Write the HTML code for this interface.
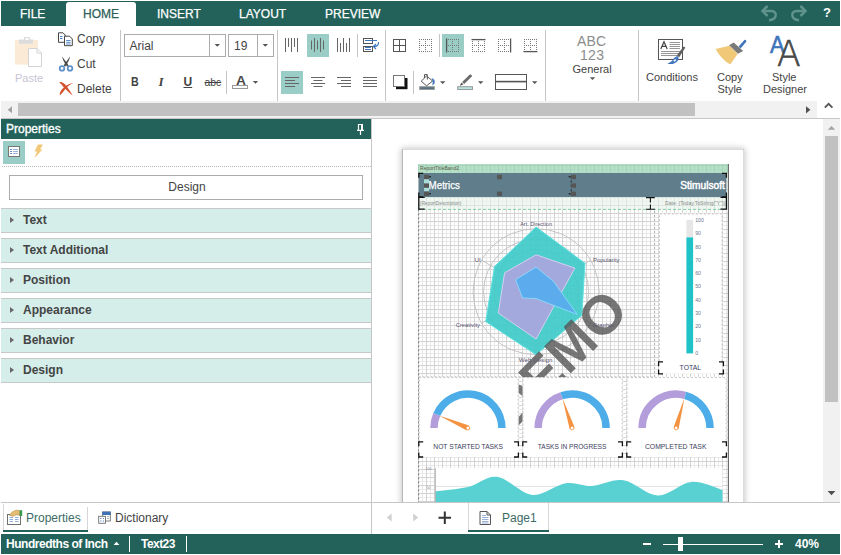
<!DOCTYPE html>
<html lang="en">
<head>
<meta charset="utf-8">
<title>Report Designer</title>
<style>
html,body{margin:0;padding:0;background:#fff;}
body{width:841px;height:555px;position:relative;overflow:hidden;font-family:"Liberation Sans",Arial,sans-serif;font-size:12px;color:#444;}
.a{position:absolute;}
.t{position:absolute;white-space:nowrap;line-height:12px;height:12px;}
.teal{background:#22625a;}
.vsep{position:absolute;width:1px;background:#c6c6c6;}
.hl{position:absolute;background:#99cdc6;}
svg{position:absolute;overflow:visible;}
.tab{position:absolute;top:8px;color:#fff;-webkit-text-stroke:0.25px currentColor;font-size:12px;line-height:12px;white-space:nowrap;}
.grp{position:absolute;left:1px;width:370px;height:23px;background:#d5eeea;border-top:1px solid #c8c8c8;border-bottom:1px solid #c8c8c8;}
.grp b{position:absolute;left:22px;top:5px;font-size:12px;line-height:12px;color:#444;white-space:nowrap;}
.grp i{position:absolute;left:9px;top:7.5px;width:0;height:0;border-left:4.5px solid #686868;border-top:3.8px solid transparent;border-bottom:3.8px solid transparent;}
</style>
</head>
<body>

<!-- ============ TOP TAB BAR ============ -->
<div class="a teal" style="left:1px;top:1px;width:839px;height:25px;"></div>
<div class="a" style="left:66px;top:2px;width:70px;height:25px;background:#fff;border-radius:3px 3px 0 0;"></div>
<div class="tab" style="left:20px;">FILE</div>
<div class="tab" style="left:83px;color:#2d5f59;">HOME</div>
<div class="tab" style="left:157px;">INSERT</div>
<div class="tab" style="left:239px;">LAYOUT</div>
<div class="tab" style="left:325px;">PREVIEW</div>

<svg style="left:758px;top:3px;" width="82" height="22">
 <g fill="none" stroke="#5f938b" stroke-width="2.5" stroke-linejoin="miter">
  <path d="M4.5 8 H13 C17 8 18.5 11 17.5 13.5 C16.5 16 14 17 11 17.2"/>
  <path d="M9.5 3 L4.5 8 L9.5 13"/>
  <path d="M47.5 8 H39 C35 8 33.5 11 34.5 13.5 C35.5 16 38 17 41 17.2"/>
  <path d="M42.5 3 L47.5 8 L42.5 13"/>
 </g>
</svg>
<div class="t" style="left:823px;top:7px;color:#fff;font-weight:bold;font-size:13px;">?</div>


<!-- ============ RIBBON ============ -->
<div class="a" id="ribbon" style="left:0;top:0;width:841px;height:101px;">

<!-- clipboard group -->
<svg style="left:14px;top:36px;" width="30" height="32">
 <rect x="1" y="4" width="23" height="24.6" fill="#fbead6"/>
 <path d="M5 3.5 H10 V1 H16 V3.5 H19 V7.8 H5 Z" fill="#dcdcdc"/>
 <rect x="11.5" y="2" width="3" height="2" fill="#fff"/>
 <path d="M14.5 12.5 H23 L27.5 17 V30.5 H14.5 Z" fill="#fff" stroke="#d3d3d3" stroke-width="1"/>
 <path d="M23 12.5 V17 H27.5" fill="none" stroke="#d3d3d3" stroke-width="1"/>
</svg>
<div class="t" style="left:15px;top:72px;font-size:11px;color:#c6c6d4;">Paste</div>

<svg style="left:57px;top:32px;" width="17" height="15">
 <path d="M1.5 0.8 H6 L8.2 3 V10.3 H1.5 Z" fill="#fff" stroke="#444" stroke-width="1"/>
 <path d="M3 4.5 H5.5 M3 6.5 H5.5" stroke="#4a7fc1" stroke-width="1"/>
 <path d="M7.5 4.2 H12.6 L15.3 7 V13.7 H7.5 Z" fill="#fff" stroke="#444" stroke-width="1"/>
 <path d="M9.2 8.5 H13.6 M9.2 10.3 H13.6 M9.2 12 H13.6" stroke="#4a7fc1" stroke-width="0.9"/>
</svg>
<div class="t" style="left:77px;top:33px;">Copy</div>

<svg style="left:58px;top:55px;" width="16" height="18">
 <path d="M4.2 1.2 C5.4 3.4 7.4 6.2 9.2 8 L10.6 11 L8.8 11.4 L7.4 8.8 C5.8 6.6 4.4 4 4.2 1.2 Z" fill="#4d4d4d"/>
 <path d="M12 1.2 C10.8 3.4 8.8 6.2 7 8 L5.6 11 L7.4 11.4 L8.8 8.8 C10.4 6.6 11.8 4 12 1.2 Z" fill="#4d4d4d"/>
 <circle cx="4" cy="13.4" r="2.3" fill="#fff" stroke="#5b8fc7" stroke-width="1.7"/>
 <circle cx="12" cy="13.4" r="2.3" fill="#fff" stroke="#5b8fc7" stroke-width="1.7"/>
</svg>
<div class="t" style="left:77px;top:58px;">Cut</div>

<svg style="left:58px;top:81px;" width="17" height="16">
 <path d="M1.2 1.2 C4.6 0.6 7.6 3.6 9.6 6.6 C11.2 9 12.8 11.6 14.8 14.4 C12 12.6 9.4 10.2 7.2 7.8 C5.2 5.6 3.4 3 1.2 1.2 Z" fill="#d4532e"/>
 <path d="M15.4 2 C12.6 3 9.8 5.2 7.8 7.6 C5.8 10 4.2 12.6 1.8 14.4 C1.2 11.6 3.2 8.6 5.8 6.4 C8.6 4 11.8 2.6 15.4 2 Z" fill="#d4532e"/>
</svg>
<div class="t" style="left:77px;top:83px;">Delete</div>

<div class="vsep" style="left:120px;top:30px;height:71px;"></div>

<!-- font group -->
<div class="a" style="left:124px;top:34px;width:100px;height:21px;border:1px solid #ababab;background:#fff;"></div>
<div class="a" style="left:209px;top:35px;width:1px;height:21px;background:#ababab;"></div>
<div class="t" style="left:129.5px;top:39.6px;">Arial</div>
<div class="a" style="left:228px;top:34px;width:44px;height:21px;border:1px solid #ababab;background:#fff;"></div>
<div class="a" style="left:257px;top:35px;width:1px;height:21px;background:#ababab;"></div>
<div class="t" style="left:234px;top:39.6px;">19</div>
<svg style="left:0;top:0;" width="841" height="101">
 <path d="M214.6 44 H220 L217.3 46.8 Z M262.6 44 H268 L265.3 46.8 Z" fill="#555"/>
 <path d="M252.8 81 H258.2 L255.5 83.8 Z" fill="#555"/>
 <path d="M440 81.2 H445.4 L442.7 84 Z M478 81.2 H483.4 L480.7 84 Z M532 81.2 H537.4 L534.7 84 Z" fill="#555"/>
 <path d="M589.8 77.2 H595.2 L592.5 80 Z" fill="#555"/>
</svg>
<div class="t" style="left:131px;top:76px;font-weight:bold;font-size:13px;color:#444;transform:scaleX(0.82);transform-origin:0 0;">B</div>
<div class="t" style="left:158.5px;top:76px;font-style:italic;font-weight:bold;font-size:13px;color:#444;font-family:'Liberation Serif',serif;">I</div>
<div class="t" style="left:183.5px;top:76px;font-weight:bold;font-size:12px;color:#444;text-decoration:underline;">U</div>
<div class="t" style="left:204.5px;top:77px;font-size:10.4px;color:#444;text-decoration:line-through;">abc</div>
<div class="vsep" style="left:226px;top:71px;height:23px;"></div>
<div class="t" style="left:235.6px;top:74.5px;font-size:13px;font-weight:bold;color:#4a4a4a;transform:scaleX(1.06);transform-origin:0 0;">A</div>
<div class="a" style="left:232px;top:85px;width:14px;height:2px;border:1px solid #999;background:#fff;"></div>

<div class="vsep" style="left:277px;top:30px;height:71px;"></div>

<!-- alignment group -->
<div class="hl" style="left:307px;top:34px;width:22px;height:23px;"></div>
<div class="hl" style="left:281px;top:71px;width:22px;height:23px;"></div>
<svg style="left:0;top:0;" width="841" height="101">
 <g stroke="#666" stroke-width="1" fill="none">
  <!-- vertical align top -->
  <path d="M285.5 38 V52 M288.5 38 V47 M291.5 38 V52 M294.5 38 V47 M297.5 38 V52"/>
  <!-- middle -->
  <path d="M311.5 40.5 V49.5 M314.5 38 V52 M317.5 40.5 V49.5 M320.5 38 V52 M323.5 40.5 V49.5"/>
  <!-- bottom -->
  <path d="M337.5 38 V52 M340.5 43 V52 M343.5 38 V52 M346.5 43 V52 M349.5 38 V52"/>
  <!-- h align left -->
  <path d="M285 77.5 H299 M285 80.5 H295 M285 83.5 H299 M285 86.5 H295"/>
  <path d="M311 77.5 H325 M313.5 80.5 H322.5 M311 83.5 H325 M313.5 86.5 H322.5"/>
  <path d="M337 77.5 H351 M341 80.5 H351 M337 83.5 H351 M341 86.5 H351"/>
  <path d="M363 77.5 H377 M363 80.5 H377 M363 83.5 H377 M363 86.5 H377"/>
 </g>
 <!-- word wrap icon -->
 <g fill="none" stroke-width="1">
  <rect x="363.5" y="38.5" width="9" height="5" stroke="#555"/>
  <rect x="363.5" y="46.5" width="9" height="5" stroke="#555"/>
  <path d="M365 40.5 H377" stroke="#3f75bb"/>
  <path d="M365 47.5 H371 M365 49.5 H371" stroke="#3f75bb"/>
  <path d="M378.5 42 C378.8 45.2 377 46.5 373.6 46.5 M376 44 L373.4 46.5 L376 49" stroke="#3f75bb" stroke-width="1.2"/>
 </g>
</svg>
<div class="vsep" style="left:357px;top:34px;height:23px;"></div>
<div class="vsep" style="left:385px;top:30px;height:71px;"></div>

<!-- border group -->
<div class="hl" style="left:442px;top:34px;width:22px;height:23px;"></div>
<div class="vsep" style="left:439px;top:34px;height:23px;"></div>
<div class="vsep" style="left:413px;top:71px;height:23px;"></div>
<svg style="left:0;top:0;" width="841" height="101">
 <g fill="none" stroke="#555" stroke-width="1">
  <rect x="393.5" y="39.5" width="12" height="12"/>
  <path d="M399.5 39.5 V51.5 M393.5 45.5 H405.5"/>
 </g>
 <g fill="none" stroke="#777" stroke-width="1" stroke-dasharray="1 1">
  <path d="M419 39.5 H432 M419 45.5 H432 M419 51.5 H432 M419.5 39 V52 M425.5 39 V52 M431.5 39 V52"/>
  <path d="M446 39.5 H459 M446 45.5 H459 M446 51.5 H459 M452.5 39 V52 M458.5 39 V52"/>
  <path d="M472 45.5 H485 M472 51.5 H485 M472.5 39 V52 M478.5 39 V52 M484.5 39 V52"/>
  <path d="M498 39.5 H511 M498 45.5 H511 M498 51.5 H511 M498.5 39 V52 M504.5 39 V52"/>
  <path d="M524 39.5 H537 M524 45.5 H537 M524.5 39 V52 M530.5 39 V52 M536.5 39 V52"/>
 </g>
 <g fill="none" stroke="#555" stroke-width="1.3">
  <path d="M446.6 38.5 V52.5"/>
  <path d="M471.5 39.6 H485.5"/>
  <path d="M510.6 38.5 V52.5"/>
  <path d="M523.5 51.6 H537.5"/>
 </g>
 <!-- shadow -->
 <rect x="396" y="78" width="11.5" height="11.2" fill="#111"/>
 <rect x="393.5" y="75.5" width="11" height="11" fill="#fff" stroke="#777" stroke-width="1"/>
 <!-- fill bucket -->
 <rect x="419.7" y="86.7" width="14.6" height="2.8" fill="#55717f" stroke="#9a9a9a" stroke-width="1"/>
 <path d="M421.2 81.2 L426.5 75.9 L432.6 81 L426.6 85.8 Z" fill="#fff" stroke="#555" stroke-width="1"/>
 <path d="M424.5 78 V74.6 H427.3 V79.6" fill="none" stroke="#555" stroke-width="1"/>
 <path d="M431.6 77.9 C434 78.6 435.4 81 434.6 83 C434 84.4 433.2 85 432.2 85.2 C433 83 433 80.4 431.6 77.9 Z" fill="#3f75bb"/>
 <!-- border color pen -->
 <rect x="457.7" y="86.7" width="14.8" height="2.8" fill="#b4e5df" stroke="#9a9a9a" stroke-width="1"/>
 <path d="M459.6 85.8 L461.6 82.6 L463.4 84.4 Z" fill="#555"/>
 <path d="M462.2 82 L469.8 74.6 C470.8 73.8 472.6 75.4 471.8 76.6 L464.2 84 Z" fill="#6a6a6a"/>
 <!-- border style -->
 <rect x="495.5" y="74.5" width="31" height="15" fill="#fff" stroke="#555" stroke-width="1"/>
 <path d="M495 81.6 H527" stroke="#555" stroke-width="1.6"/>
</svg>
<div class="vsep" style="left:545px;top:30px;height:71px;"></div>

<!-- text format -->
<div class="t" style="left:577px;top:33.5px;font-size:14px;line-height:14px;height:14px;color:#8c8c8c;letter-spacing:0.2px;">ABC</div>
<div class="t" style="left:580px;top:47.5px;font-size:14px;line-height:14px;height:14px;color:#8c8c8c;letter-spacing:0.3px;">123</div>
<div class="t" style="left:572.5px;top:63px;font-size:11px;">General</div>
<div class="vsep" style="left:638px;top:30px;height:71px;"></div>

<!-- big buttons -->
<svg style="left:656px;top:37px;" width="32" height="30">
 <rect x="2.5" y="2.5" width="24" height="20" fill="#fff" stroke="#555" stroke-width="1"/>
 <path d="M4.8 12 L8 4.8 L11.2 12 M6 9.4 H10" fill="none" stroke="#444" stroke-width="1.2"/>
 <path d="M13.5 5.5 H24 M13.5 7.5 H24 M13.5 9.5 H24 M13.5 11.5 H24 M5 14.5 H24 M5 16.5 H24 M5 18.5 H21" stroke="#8a8a8a" stroke-width="0.9"/>
 <path d="M29.4 10.6 L23.2 20.2 L20.8 18.4 L27.6 9.4 Z" fill="#5e5e5e"/>
 <path d="M21.4 19 C19.8 19.4 18.2 20.6 17.2 22.2 C16 24.2 14 25.6 11.4 26.4 C14.6 27.8 19.6 26.8 22 23.4 C23 22 22.8 20.2 21.4 19 Z" fill="#3f75bb"/>
 <ellipse cx="18.8" cy="23.4" rx="1.5" ry="0.9" transform="rotate(-35 18.8 23.4)" fill="#fff"/>
</svg>
<div class="t" style="left:646px;top:71px;font-size:11px;">Conditions</div>

<svg style="left:713px;top:37px;" width="34" height="30">
 <path d="M25.6 9.6 L31.4 3 C32.2 2.2 34 3.8 33.2 4.8 L27.6 11.4 Z" fill="#3f75bb"/>
 <path d="M16 8.2 L20.7 5.4 L30.2 13.9 L24.9 16.8 Z" fill="#7a7a7a"/>
 <path d="M2.6 12 L16.4 8.8 L24.6 17 L17.2 27.6 C11.4 24 6.4 19 2.6 12 Z" fill="#f0c878"/>
</svg>
<div class="t" style="left:717px;top:71px;font-size:11px;">Copy</div>
<div class="t" style="left:717.5px;top:83px;font-size:11px;">Style</div>

<div class="t" style="left:770.4px;top:33px;font-size:23px;line-height:24px;height:24px;color:#3f75bb;-webkit-text-stroke:0.6px #3f75bb;transform:scaleX(0.95);transform-origin:0 0;">A</div>
<div class="t" style="left:776.6px;top:36px;font-family:'DejaVu Sans',sans-serif;font-weight:200;font-size:36px;line-height:36px;height:36px;color:#484848;-webkit-text-stroke:0.7px #484848;transform:scaleX(0.96);transform-origin:0 0;">A</div>
<div class="t" style="left:772px;top:71px;font-size:11px;">Style</div>
<div class="t" style="left:763px;top:83px;font-size:11px;">Designer</div>

</div>

<!-- ribbon horizontal scrollbar -->
<div class="a" style="left:1px;top:101px;width:816px;height:17px;background:#f1f1f1;"></div>
<div class="a" style="left:18px;top:103px;width:677px;height:13px;background:#c1c1c1;"></div>
<svg style="left:0;top:101px;" width="841" height="17"><path d="M12 5.2 L12 12.2 L7.6 8.7 Z" fill="#a3a3a3"/><path d="M806 5.2 L806 12.4 L810.4 8.8 Z" fill="#505050"/><path d="M824.8 6.6 L828.6 2.8 L832.4 6.6" fill="none" stroke="#555" stroke-width="1.8"/></svg>
<div class="a" style="left:1px;top:118px;width:839px;height:1px;background:#c6c6c6;"></div>

<!-- ============ PROPERTIES PANEL ============ -->
<div class="a teal" style="left:1px;top:119px;width:370px;height:20px;"></div>
<div class="t" style="left:6px;top:123px;color:#fff;-webkit-text-stroke:0.35px #fff;">Properties</div>

<!-- pin -->
<svg style="left:355px;top:122px;" width="12" height="14"><path d="M3 2.5 H8 M3.5 2 V8 M2 8.4 H9 M5.5 9 V13" fill="none" stroke="#fff" stroke-width="1.2"/><path d="M7 2 V8" stroke="#fff" stroke-width="2" fill="none"/></svg>
<!-- panel toolbar -->
<div class="hl" style="left:3px;top:141px;width:22px;height:23px;"></div>
<svg style="left:8px;top:146px;" width="12" height="11"><rect x="0.5" y="0.5" width="11" height="10" fill="#fff" stroke="#777" stroke-width="1"/><path d="M2 3.5 H4 M2 5.5 H4 M2 7.5 H4" stroke="#6f8fc9" stroke-width="1"/><path d="M5 3.5 H10 M5 5.5 H10 M5 7.5 H10" stroke="#9db3dc" stroke-width="1"/></svg>
<svg style="left:33px;top:144px;" width="11" height="15"><path d="M5 0.5 L10 0.5 L7 5.5 L9.5 5.5 L1.5 14 L4 7.5 L1.5 7.5 Z" fill="#f2c777"/></svg>
<div class="a" style="left:2px;top:166px;width:369px;height:0;border-top:1px dotted #b8b8b8;"></div>
<!-- design button -->
<div class="a" style="left:9px;top:175px;width:352px;height:23px;border:1px solid #ababab;background:#fff;"></div>
<div class="t" style="left:167px;top:181px;width:40px;text-align:center;color:#444;">Design</div>
<!-- groups -->
<div class="grp" style="top:208px;"><i></i><b>Text</b></div>
<div class="grp" style="top:238px;"><i></i><b>Text Additional</b></div>
<div class="grp" style="top:268px;"><i></i><b>Position</b></div>
<div class="grp" style="top:298px;"><i></i><b>Appearance</b></div>
<div class="grp" style="top:328px;"><i></i><b>Behavior</b></div>
<div class="grp" style="top:358px;"><i></i><b>Design</b></div>


<!-- ============ CANVAS ============ -->
<div class="vsep" style="left:371px;top:119px;height:415px;"></div>
<div class="a" id="pageshadow" style="left:372px;top:119px;width:451px;height:383px;overflow:hidden;"><div class="a" style="left:30px;top:30px;width:340px;height:440px;background:#fff;border:1px solid #b8b8b8;box-shadow:0 0 6px 1px rgba(0,0,0,0.22);"></div></div>
<!--CANVAS_START-->
<svg style="left:0;top:0;" width="841" height="555" font-family="Liberation Sans, Arial, sans-serif">
<defs>
<clipPath id="cv"><rect x="372" y="119" width="451" height="383"/></clipPath>
<pattern id="grid" x="0" y="0" width="8" height="8" patternUnits="userSpaceOnUse"><path d="M6.5 0 V8 M0 1.5 H8" stroke="#e9e9e9" stroke-width="1" fill="none"/><path d="M2.5 0 V8 M0 5.5 H8" stroke="#d2d2d2" stroke-width="1" fill="none"/></pattern>
<pattern id="gridg" x="0" y="0" width="8" height="8" patternUnits="userSpaceOnUse"><path d="M6.5 0 V8 M0 1.5 H8" stroke="#e8f1ec" stroke-width="1" fill="none"/><path d="M2.5 0 V8 M0 5.5 H8" stroke="#d9e6de" stroke-width="1" fill="none"/></pattern>
<pattern id="gridh" x="0" y="0" width="8" height="8" patternUnits="userSpaceOnUse"><path d="M6.5 0 V8 M0 1.5 H8" stroke="#aedac1" stroke-width="1" fill="none"/><path d="M2.5 0 V8 M0 5.5 H8" stroke="#a5d3b9" stroke-width="1" fill="none"/></pattern>
</defs>
<g clip-path="url(#cv)">
<rect x="403" y="149.5" width="340.5" height="400" fill="#fff"/>
<rect x="418" y="164" width="310" height="9" fill="#b5dfc7"/>
<rect x="418" y="164" width="310" height="9" fill="url(#gridh)"/>
<text x="420" y="169.9" font-size="5" fill="#5a5a4a" textLength="39" lengthAdjust="spacingAndGlyphs">ReportTitleBand2</text>
<rect x="418" y="173" width="310" height="36.4" fill="#f1f8f4"/>
<rect x="418" y="173" width="310" height="36.4" fill="url(#gridg)"/>
<rect x="418" y="209.4" width="310" height="300" fill="#fff"/>
<rect x="418" y="209.4" width="310" height="300" fill="url(#grid)"/>
<rect x="418.6" y="173" width="307.8" height="24" fill="#607d8b"/>
<text x="428.6" y="188.8" font-size="10" fill="#fff" stroke="#fff" stroke-width="0.25" textLength="31.4" lengthAdjust="spacingAndGlyphs">Metrics</text>
<text x="680.2" y="189.2" font-size="10" fill="#fff" stroke="#fff" stroke-width="0.45" textLength="44.6" lengthAdjust="spacingAndGlyphs">Stimulsoft</text>
<text x="419.8" y="204.8" font-size="5" fill="#8a8a8a" textLength="41.6" lengthAdjust="spacingAndGlyphs">{ReportDescription}</text>
<text x="665" y="204.8" font-size="5" fill="#8a8a8a" textLength="60.4" lengthAdjust="spacingAndGlyphs">Date: {Today.ToString("Y")}</text>
<path d="M418 209.4 H728" stroke="#86cfa6" stroke-width="1" stroke-dasharray="3 2" fill="none"/>
<path d="M418.6 209.4 V510" stroke="#777" stroke-width="1" stroke-dasharray="2 2" fill="none"/>
<path d="M728.4 164 V510" stroke="#666" stroke-width="1.1" fill="none"/>
<circle cx="536.1" cy="291.7" r="63" fill="none" stroke="#bebebe" stroke-width="0.9"/>
<circle cx="536.1" cy="291.7" r="52.5" fill="none" stroke="#bebebe" stroke-width="0.9"/>
<circle cx="536.1" cy="291.7" r="42" fill="none" stroke="#bebebe" stroke-width="0.9"/>
<circle cx="536.1" cy="291.7" r="31.5" fill="none" stroke="#bebebe" stroke-width="0.9"/>
<circle cx="536.1" cy="291.7" r="21" fill="none" stroke="#bebebe" stroke-width="0.9"/>
<circle cx="536.1" cy="291.7" r="10.5" fill="none" stroke="#bebebe" stroke-width="0.9"/>
<path d="M536.1 291.7 L536.1 228.7" stroke="#bebebe" stroke-width="0.9"/>
<path d="M536.1 291.7 L590.7 260.2" stroke="#bebebe" stroke-width="0.9"/>
<path d="M536.1 291.7 L590.7 323.2" stroke="#bebebe" stroke-width="0.9"/>
<path d="M536.1 291.7 L536.1 354.7" stroke="#bebebe" stroke-width="0.9"/>
<path d="M536.1 291.7 L481.5 323.2" stroke="#bebebe" stroke-width="0.9"/>
<path d="M536.1 291.7 L481.5 260.2" stroke="#bebebe" stroke-width="0.9"/>
<path d="M418.6 377 H654.6 V209.4" stroke="#aaa" stroke-width="1" stroke-dasharray="2 2" fill="none"/>
<polygon points="536.1,227.1 585.0,263.3 581.8,315.3 536.1,354.7 485.7,321.6 494.5,266.5" fill="#3fcbc9" fill-opacity="0.92" stroke="#5fe3e2" stroke-width="1"/>
<polygon points="536.1,254.8 574.9,268.1 555.7,303.0 536.1,339.0 498.3,313.1 504.6,272.8" fill="#a9a7dd" fill-opacity="0.95" stroke="#e8d6f5" stroke-width="0.8"/>
<polygon points="536.1,267.1 553.4,281.3 577.1,314.4 536.1,298.6 522.5,298.0 515.6,279.7" fill="#58abec" fill-opacity="0.95" stroke="#8fe0ff" stroke-width="0.8"/>
<text transform="translate(558.6 357.5) rotate(-45)" x="0" y="19.7" text-anchor="middle" font-size="55" font-weight="bold" fill="#555" fill-opacity="0.8">DEMO</text>
<text x="520.2" y="226" font-size="5.6" fill="#5d5570" textLength="31.8" lengthAdjust="spacingAndGlyphs">Art. Direction</text>
<text x="592.9" y="261.6" font-size="5.6" fill="#5d5570" textLength="26.7" lengthAdjust="spacingAndGlyphs">Popularity</text>
<text x="474.6" y="261.6" font-size="5.6" fill="#5d5570" textLength="6.2" lengthAdjust="spacingAndGlyphs">UI</text>
<text x="455.7" y="326.8" font-size="5.6" fill="#5d5570" textLength="24.3" lengthAdjust="spacingAndGlyphs">Creativity</text>
<text x="592.9" y="326.8" font-size="5.6" fill="#5d5570" textLength="20.4" lengthAdjust="spacingAndGlyphs">Graphic</text>
<text x="518.8" y="362.4" font-size="5.6" fill="#5d5570" textLength="33.7" lengthAdjust="spacingAndGlyphs">Web Design</text>
<rect x="658.8" y="213.4" width="63.6" height="160.4" fill="#fff"/>
<path d="M659.3 361.4 V213.9 H722.1 V361.4" fill="none" stroke="#bdbdbd" stroke-width="1" stroke-dasharray="2 2"/>
<rect x="686.4" y="219.9" width="6.7" height="17.6" fill="#e6e6e6"/>
<rect x="686.4" y="237.4" width="6.7" height="116" fill="#1fc2c7"/>
<text x="695.2" y="222.1" font-size="5.2" fill="#6c7a8c">100</text>
<text x="695.2" y="235.4" font-size="5.2" fill="#6c7a8c">90</text>
<text x="695.2" y="248.6" font-size="5.2" fill="#6c7a8c">80</text>
<text x="695.2" y="261.9" font-size="5.2" fill="#6c7a8c">70</text>
<text x="695.2" y="275.2" font-size="5.2" fill="#6c7a8c">60</text>
<text x="695.2" y="288.4" font-size="5.2" fill="#6c7a8c">50</text>
<text x="695.2" y="301.7" font-size="5.2" fill="#6c7a8c">40</text>
<text x="695.2" y="315.0" font-size="5.2" fill="#6c7a8c">30</text>
<text x="695.2" y="328.3" font-size="5.2" fill="#6c7a8c">20</text>
<text x="695.2" y="341.5" font-size="5.2" fill="#6c7a8c">10</text>
<text x="695.2" y="354.8" font-size="5.2" fill="#6c7a8c">0</text>
<text x="679.6" y="370.2" font-size="7.6" fill="#3a3d5c" textLength="21.4" lengthAdjust="spacingAndGlyphs">TOTAL</text>
<rect x="418.9" y="377.2" width="99.70000000000005" height="79.8" fill="#fff"/>
<path d="M419.29999999999995 441.6 V377.6 H518.2 V441.6" fill="none" stroke="#bdbdbd" stroke-width="0.9" stroke-dasharray="2 2"/>
<path d="M433.95 428.0 A33.95 33.95 0 0 1 436.79 414.41" fill="none" stroke="#b39ddb" stroke-width="7.5000000000000036"/>
<path d="M436.79 414.41 A33.95 33.95 0 0 1 501.85 428.0" fill="none" stroke="#4dade9" stroke-width="7.5000000000000036"/>
<path d="M439.03 415.39 L468.94 425.62 L466.86 430.38 Z" fill="#f59240"/>
<circle cx="467.9" cy="428.0" r="1.9" fill="#fff" stroke="#f59240" stroke-width="0.9"/>
<text x="433.3" y="448.9" font-size="7.8" fill="#3a3d5c" textLength="69.7" lengthAdjust="spacingAndGlyphs">NOT STARTED TASKS</text>
<rect x="522.6" y="377.2" width="100.0" height="79.8" fill="#fff"/>
<path d="M523.0 441.6 V377.6 H622.2 V441.6" fill="none" stroke="#bdbdbd" stroke-width="0.9" stroke-dasharray="2 2"/>
<path d="M538.15 428.0 A33.95 33.95 0 0 1 561.61 395.71" fill="none" stroke="#b39ddb" stroke-width="7.5000000000000036"/>
<path d="M561.61 395.71 A33.95 33.95 0 0 1 606.05 428.0" fill="none" stroke="#4dade9" stroke-width="7.5000000000000036"/>
<path d="M562.37 398.04 L574.57 427.20 L569.63 428.80 Z" fill="#f59240"/>
<circle cx="572.1" cy="428.0" r="1.9" fill="#fff" stroke="#f59240" stroke-width="0.9"/>
<text x="537.8" y="448.9" font-size="7.8" fill="#3a3d5c" textLength="68.5" lengthAdjust="spacingAndGlyphs">TASKS IN PROGRESS</text>
<rect x="626.6" y="377.2" width="100.0" height="79.8" fill="#fff"/>
<path d="M627.0 441.6 V377.6 H726.2 V441.6" fill="none" stroke="#bdbdbd" stroke-width="0.9" stroke-dasharray="2 2"/>
<path d="M642.15 428.0 A33.95 33.95 0 0 1 685.17 395.28" fill="none" stroke="#b39ddb" stroke-width="7.5000000000000036"/>
<path d="M685.17 395.28 A33.95 33.95 0 0 1 710.05 428.0" fill="none" stroke="#4dade9" stroke-width="7.5000000000000036"/>
<path d="M684.52 397.65 L678.61 428.69 L673.59 427.31 Z" fill="#f59240"/>
<circle cx="676.1" cy="428.0" r="1.9" fill="#fff" stroke="#f59240" stroke-width="0.9"/>
<text x="644.9" y="448.9" font-size="7.8" fill="#3a3d5c" textLength="61.6" lengthAdjust="spacingAndGlyphs">COMPLETED TASK</text>
<rect x="435.3" y="468.2" width="287.2" height="40" fill="#fff"/>
<path d="M435.3 486.4 H722.5" stroke="#e2e2e2" stroke-width="1"/>
<path d="M435.3 491.4 C440.8 490.7 457.7 489.4 468.0 487.0 C478.3 484.6 486.3 475.5 497.0 476.8 C507.7 478.1 520.9 493.8 532.3 494.9 C543.7 496.0 555.6 484.8 565.6 483.3 C575.6 481.8 582.4 486.5 592.0 486.0 C601.6 485.5 612.5 478.7 623.5 480.3 C634.5 481.9 646.5 495.2 657.8 495.5 C669.1 495.8 680.4 482.8 691.2 481.9 C702.0 481.0 717.3 488.6 722.5 490.0 L722.5 510 L435.3 510 Z" fill="#59d0d2"/>
<path d="M435.3 468.2 V510" stroke="#b0b0b0" stroke-width="1"/>
<text x="425.5" y="470.2" font-size="3.6" fill="#8a7f95">100</text>
<text x="426.6" y="489.2" font-size="3.6" fill="#8a7f95">50</text>
<path d="M418.8 177.8 V173.4 H423.2 M722.0 173.4 H726.4 V177.8 M726.4 192.6 V197 H722.0 M423.2 197 H418.8 V192.6" fill="none" stroke="#111" stroke-width="1.3"/>
<path d="M418.8 203.3 V197.4 H424.7 M720.5 197.4 H726.4 V203.3 M726.4 203.29999999999998 V209.2 H720.5 M424.7 209.2 H418.8 V203.29999999999998" fill="none" stroke="#111" stroke-width="1.3"/>
<path d="M418.8 446.2 V441.8 H423.2 M514.0 441.8 H518.4 V446.2 M518.4 452.6 V457 H514.0 M423.2 457 H418.8 V452.6" fill="none" stroke="#111" stroke-width="1.3"/>
<path d="M522.8 446.2 V441.8 H527.1999999999999 M618.0 441.8 H622.4 V446.2 M622.4 452.6 V457 H618.0 M527.1999999999999 457 H522.8 V452.6" fill="none" stroke="#111" stroke-width="1.3"/>
<path d="M626.8 446.2 V441.8 H631.1999999999999 M722.0 441.8 H726.4 V446.2 M726.4 452.6 V457 H722.0 M631.1999999999999 457 H626.8 V452.6" fill="none" stroke="#111" stroke-width="1.3"/>
<path d="M658.6 366.2 V361.8 H663.0 M719.0 361.8 H723.4 V366.2 M723.4 369.40000000000003 V373.8 H719.0 M663.0 373.8 H658.6 V369.40000000000003" fill="none" stroke="#111" stroke-width="1.3"/>
<path d="M646 197.6 H654.8 M646 209.2 H654.8 M650.4 197.6 V202.6 M650.4 204.6 V209.2" stroke="#111" stroke-width="1.1" fill="none"/>
<path d="M571.2 176 V195" stroke="#222" stroke-width="0.9" stroke-dasharray="2.2 2.2"/>
<rect x="424" y="179" width="5" height="12.4" fill="#a9dcd8"/>
<rect x="424" y="174.8" width="5" height="4.4" fill="#565656"/>
<rect x="424" y="183.4" width="5" height="4.4" fill="#565656"/>
<rect x="424" y="191.6" width="5" height="4.4" fill="#565656"/>
<rect x="497" y="174.8" width="5" height="4.4" fill="#565656"/>
<rect x="497" y="191.6" width="5" height="4.4" fill="#565656"/>
<rect x="571" y="174.8" width="5" height="4.4" fill="#565656"/>
<rect x="571" y="183.4" width="5" height="4.4" fill="#565656"/>
<rect x="571" y="191.6" width="5" height="4.4" fill="#565656"/>
<path d="M429 176.8 H431 M429 193.8 H431 M568.6 176.8 H570.6 M568.6 193.8 H570.6" stroke="#111" stroke-width="1"/>
</g></svg>
<!--CANVAS_END-->

<!-- vertical scrollbar -->
<div class="a" style="left:823px;top:119px;width:17px;height:383px;background:#f1f1f1;"></div>
<div class="a" style="left:825px;top:136px;width:13px;height:266px;background:#c1c1c1;"></div>
<svg style="left:823px;top:119px;" width="17" height="383"><path d="M4.8 10.8 L12.2 10.8 L8.5 7 Z" fill="#a3a3a3"/><path d="M4.6 372 L12.4 372 L8.5 376.2 Z" fill="#505050"/></svg>

<!-- ============ BOTTOM BARS ============ -->
<div class="a" style="left:1px;top:502px;width:839px;height:1px;background:#c6c6c6;"></div>

<!-- panel tabs -->
<div class="a" style="left:3px;top:530px;width:85px;height:2px;background:#22625a;"></div>
<div class="a" style="left:87px;top:507px;width:1px;height:23px;background:#d6d6d6;"></div>
<div class="a" style="left:3px;top:504px;width:1px;height:26px;background:#d6d6d6;"></div>
<svg style="left:6px;top:509px;" width="18" height="17">
 <rect x="1.5" y="5.5" width="13" height="10" fill="#fff" stroke="#707070" stroke-width="1"/>
 <path d="M3.5 8.5 H7 M3.5 10.5 H7 M3.5 12.5 H7 M9 8.5 H12.5 M9 10.5 H12.5 M9 12.5 H12.5" stroke="#8fb0e0" stroke-width="1"/>
 <path d="M3.6 6.2 C5 3.4 8 1.4 11 1.2 L13.6 1.6 L13.8 6.4 C11.4 5 8.6 6.4 7 7.4 Z" fill="#e3bd72" stroke="#b8914a" stroke-width="0.6"/>
 <rect x="13.6" y="1.2" width="2.6" height="5.8" fill="#3b9a4a"/>
</svg>
<div class="t" style="left:26px;top:511.6px;color:#3d6b65;">Properties</div>
<svg style="left:98px;top:511px;" width="13" height="14">
 <rect x="4.7" y="1" width="7.6" height="9" fill="#fff" stroke="#707070" stroke-width="0.9"/>
 <rect x="4.3" y="0.6" width="8.4" height="3.4" fill="#3f6fb5"/>
 <path d="M9.5 5.5 H10.5 M9.5 7.5 H10.5" stroke="#666" stroke-width="1"/>
 <rect x="0.7" y="5.3" width="6.8" height="7" fill="#fff" stroke="#707070" stroke-width="0.9"/>
 <path d="M2.3 7.5 H3.4 M4.8 7.5 H5.9 M2.3 10 H3.4 M4.8 10 H5.9" stroke="#4f7fc4" stroke-width="1.1"/>
</svg>
<div class="t" style="left:115px;top:511.6px;color:#444;">Dictionary</div>
<!-- page tabs -->
<svg style="left:380px;top:505px;" width="80" height="26">
 <path d="M11.6 8.5 L11.6 16.6 L6.9 12.5 Z" fill="#d0d0d0"/>
 <path d="M33.2 8.5 L33.2 16.6 L38.2 12.5 Z" fill="#d0d0d0"/>
 <path d="M58.5 12.8 H71 M64.8 6.6 V19" stroke="#333" stroke-width="2" fill="none"/>
</svg>
<div class="a" style="left:468px;top:503px;width:1px;height:27px;background:#d6d6d6;"></div>
<div class="a" style="left:548px;top:503px;width:1px;height:27px;background:#d6d6d6;"></div>
<div class="a" style="left:468px;top:530px;width:81px;height:2px;background:#22625a;"></div>
<svg style="left:479px;top:511px;" width="13" height="14"><path d="M1 0.5 H8 L11.5 4 V13.5 H1 Z" fill="#fff" stroke="#555" stroke-width="1"/><path d="M8 0.5 V4 H11.5" fill="none" stroke="#555" stroke-width="1"/><path d="M3 4.5 H7 M3 6.5 H9.5 M3 8.5 H9.5 M3 10.5 H9.5 M3 12 H9.5" stroke="#7f9fd4" stroke-width="0.8"/></svg>
<div class="t" style="left:502px;top:511.6px;color:#3d6b65;">Page1</div>


<!-- ============ STATUS BAR ============ -->
<div class="a teal" style="left:1px;top:534px;width:839px;height:20px;"></div>

<div class="t" style="left:6px;top:538px;color:#fff;font-weight:bold;letter-spacing:-0.47px;">Hundredths of Inch</div>
<svg style="left:113px;top:541px;" width="7" height="5"><path d="M0.6 4 L3.5 0.8 L6.4 4 Z" fill="#fff"/></svg>
<div class="a" style="left:129px;top:536px;width:1px;height:16px;background:#fff;"></div>
<div class="t" style="left:141px;top:538px;color:#fff;font-weight:bold;letter-spacing:-0.55px;">Text23</div>
<div class="a" style="left:186px;top:536px;width:1px;height:16px;background:#fff;"></div>
<div class="a" style="left:643px;top:543px;width:8px;height:2px;background:#fff;"></div>
<div class="a" style="left:663px;top:544px;width:100px;height:1px;background:#fff;"></div>
<div class="a" style="left:678px;top:537px;width:5px;height:14px;background:#fff;"></div>
<div class="a" style="left:775px;top:543px;width:8px;height:2px;background:#fff;"></div>
<div class="a" style="left:778px;top:540px;width:2px;height:8px;background:#fff;"></div>
<div class="t" style="left:795px;top:538px;color:#fff;font-weight:bold;">40%</div>


</body>
</html>
